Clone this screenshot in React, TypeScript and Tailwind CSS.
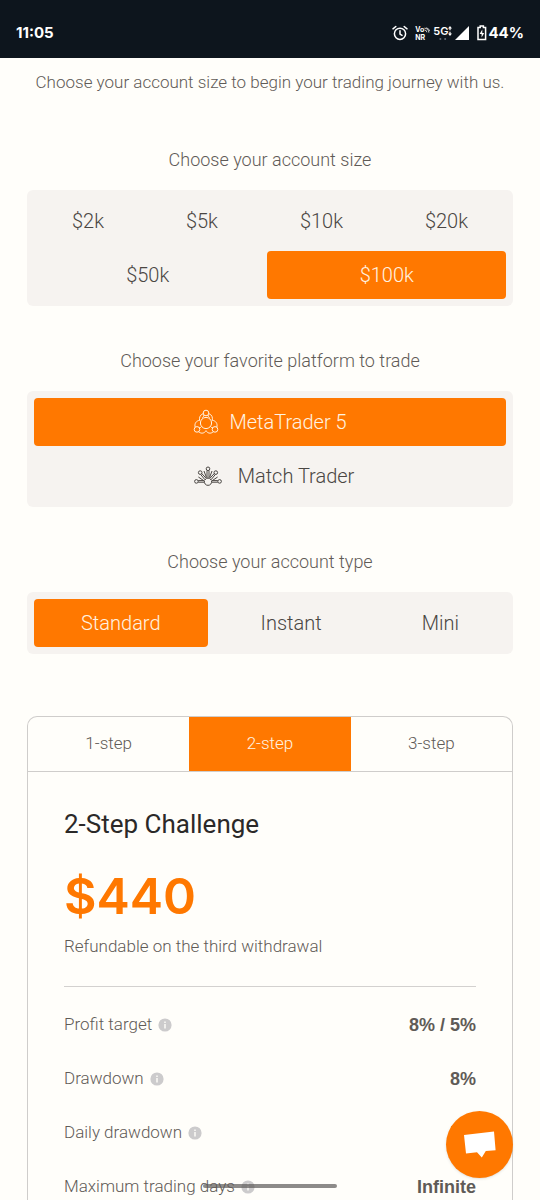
import { useState, type ReactNode } from "react";
import { clsx } from "clsx";

const SIZES = ["$2k", "$5k", "$10k", "$20k", "$50k", "$100k"];
const TYPES = ["Standard", "Instant", "Mini"];
const STEPS = ["1-step", "2-step", "3-step"];

const DETAILS = [
  { label: "Profit target", value: "8% / 5%" },
  { label: "Drawdown", value: "8%" },
  { label: "Daily drawdown", value: "5%" },
  { label: "Maximum trading days", value: "Infinite" },
];

function StatusBar() {
  return (
    <header className="flex h-[58px] shrink-0 items-center justify-between bg-[#0d151d] px-4 pt-2 font-['Inter',sans-serif] text-white">
      <span className="text-[15px] font-bold">11:05</span>
      <div className="flex items-center gap-[3px]">
        <svg
          className="mr-1 size-4"
          viewBox="0 0 16 16"
          fill="none"
          stroke="currentColor"
          strokeWidth="1.5"
          strokeLinecap="round"
        >
          <circle cx="8" cy="8.8" r="5.6" />
          <path d="M8 5.8v3.3l2 1.3M1 3.8l2.8-2.3M15 3.8l-2.8-2.3" />
        </svg>
        <div className="flex flex-col text-[7px] leading-[7px] font-bold">
          <span className="flex items-center">
            Vo
            <svg
              className="h-2 w-1.5"
              viewBox="0 0 8 8"
              fill="none"
              stroke="currentColor"
              strokeWidth="1"
            >
              <path d="M.5 1.5a6 6 0 0 1 6 6M.8 4a3.2 3.2 0 0 1 3 3M3 1a6 6 0 0 1 4.6 4.5" />
            </svg>
          </span>
          <span>NR</span>
        </div>
        <div className="flex flex-col">
          <span className="flex items-center text-[11px] leading-3 font-semibold">
            5G
            <svg className="h-2.5 w-1" viewBox="0 0 4 10" fill="currentColor">
              <path d="M2 0l2 2.6H2.6v1.6H1.4V2.6H0zM2 10L0 7.4h1.4V5.8h1.2v1.6H4z" />
            </svg>
          </span>
          <svg className="mx-auto h-1 w-2" viewBox="0 0 8 4" fill="#66707a">
            <circle cx="1.4" cy="2" r="1" />
            <circle cx="6.2" cy="2" r="1" />
          </svg>
        </div>
        <svg className="size-3.5" viewBox="0 0 14 14" fill="currentColor">
          <path d="M14 0v14H0z" />
        </svg>
        <div className="ml-1 flex items-center">
          <svg
            className="h-4 w-3"
            viewBox="0 0 12 16"
            fill="none"
            stroke="currentColor"
            strokeWidth="1.5"
          >
            <path d="M4.2 2.5V1h3.2v1.5h2.2v12H2v-12z" />
            <path d="M6.3 4.6L3.6 9h2v3.4L8.2 8h-1.9z" fill="currentColor" stroke="none" />
          </svg>
          <span className="text-[15px] leading-5 font-bold">44%</span>
        </div>
      </div>
    </header>
  );
}

function MetaTraderIcon() {
  return (
    <svg
      className="size-[26px]"
      viewBox="0 0 26 26"
      fill="none"
      stroke="currentColor"
      strokeWidth="1"
    >
      <circle cx="13" cy="14" r="5.6" />
      <circle cx="13" cy="4" r="2.8" />
      <circle cx="4" cy="20.4" r="2.8" />
      <circle cx="22" cy="20.4" r="2.8" />
      <path d="M10.2 4.6C7.2 5.6 6 8.6 6.6 11.4M15.8 4.6c3 1 4.2 4 3.4 6.8" />
      <path d="M2.2 18.2c-1-3.4.8-6.4 4.6-7M23.8 18.2c1-3.4-.8-6.4-4.6-7" />
      <path d="M6.2 18.6c1 .2 1.8-.2 2.2-1M19.8 18.6c-1 .2-1.8-.2-2.2-1M10.8 6c.2 1-.4 2-1.4 2.6M15.2 6c-.2 1 .4 2 1.4 2.6" />
      <path d="M5.6 22.8c3 2.4 6 1.4 7.4-1.2 1.4 2.6 4.4 3.6 7.4 1.2" />
    </svg>
  );
}

function MatchTraderIcon() {
  return (
    <svg
      className="h-5 w-9"
      viewBox="-8 0 36 20"
      fill="none"
      stroke="currentColor"
      strokeWidth="1"
    >
      <circle cx="14" cy="2.8" r="1.8" />
      <circle cx="6.2" cy="6.6" r="1.8" />
      <circle cx="21.8" cy="6.6" r="1.8" />
      <circle cx="2.4" cy="15.4" r="1.8" />
      <circle cx="25.6" cy="15.4" r="1.8" />
      <path d="M10.4 14.8a3.7 3.7 0 1 0 7.2 0" />
      <path d="M13 4.6v7.6h2V4.6" />
      <path d="M6.6 8.4l4.4 5.4 1.4-1.2-4.8-5.2M21.4 8.4L17 13.8l-1.4-1.2 4.8-5.2" />
      <path d="M4.2 14.6h6.2M4.2 16.2h6.2M17.6 14.6h6.2M17.6 16.2h6.2" />
      <path d="M4.4 11l5 3.4M23.6 11l-5 3.4M10 5l2.4 6.4M18 5l-2.4 6.4" />
    </svg>
  );
}

const PLATFORMS = [
  { name: "MetaTrader 5", icon: <MetaTraderIcon />, gap: "gap-2.5" },
  { name: "Match Trader", icon: <MatchTraderIcon />, gap: "gap-4" },
];

interface OptionProps {
  selected: boolean;
  onClick: () => void;
  className?: string;
  children: ReactNode;
}

function Option({ selected, onClick, className, children }: OptionProps) {
  return (
    <button
      type="button"
      aria-pressed={selected}
      onClick={onClick}
      className={clsx(
        "flex h-12 flex-auto items-center justify-center rounded px-8 text-xl",
        selected ? "bg-[#ff7800] text-[#fff3e2]" : "text-[#4a4643]",
        className
      )}
    >
      {children}
    </button>
  );
}

function OptionGroup({ title, children }: { title: string; children: ReactNode }) {
  return (
    <section>
      <h2 className="mb-4 text-center text-lg leading-7">{title}</h2>
      <div className="flex flex-wrap gap-1.5 rounded-md bg-[#f6f3f0] p-[7px]">{children}</div>
    </section>
  );
}

export default function App() {
  const [size, setSize] = useState("$100k");
  const [platform, setPlatform] = useState("MetaTrader 5");
  const [type, setType] = useState("Standard");
  const [step, setStep] = useState("2-step");

  return (
    <div className="flex h-screen flex-col overflow-hidden bg-[#fffefa] font-[Roboto,sans-serif] font-light text-[#5f5b57]">
      <StatusBar />

      <main className="flex min-h-0 flex-1 flex-col px-[27px] pt-2.5">
        <p className="mb-[50px] text-center text-[17px] leading-7">
          Choose your account size to begin your trading journey with us.
        </p>

        <div className="flex flex-col gap-[41px]">
          <OptionGroup title="Choose your account size">
            {SIZES.map((s) => (
              <Option key={s} selected={size === s} onClick={() => setSize(s)}>
                {s}
              </Option>
            ))}
          </OptionGroup>

          <OptionGroup title="Choose your favorite platform to trade">
            {PLATFORMS.map((p) => (
              <Option
                key={p.name}
                selected={platform === p.name}
                onClick={() => setPlatform(p.name)}
                className={clsx("w-full", p.gap)}
              >
                {p.icon}
                {p.name}
              </Option>
            ))}
          </OptionGroup>

          <OptionGroup title="Choose your account type">
            {TYPES.map((t) => (
              <Option key={t} selected={type === t} onClick={() => setType(t)}>
                {t}
              </Option>
            ))}
          </OptionGroup>
        </div>

        {/* Challenge card */}
        <section className="mt-[62px] min-h-0 flex-1 overflow-hidden rounded-t-[10px] border border-b-0 border-[#cfcdcb]">
          <div role="tablist" className="flex border-b border-[#cfcdcb]">
            {STEPS.map((s) => (
              <button
                key={s}
                type="button"
                role="tab"
                aria-selected={step === s}
                onClick={() => setStep(s)}
                className={clsx(
                  "h-[54px] flex-auto text-[17px]",
                  step === s && "bg-[#ff7800] text-[#fff3e2]"
                )}
              >
                {s}
              </button>
            ))}
          </div>

          <div className="px-9 pt-9">
            <h3 className="text-[26px] leading-8 font-normal text-[#2b2928]">2-Step Challenge</h3>
            <p className="mt-7 font-['Inter',sans-serif] text-[50px] leading-14 font-semibold text-[#ff7800]">
              $440
            </p>
            <p className="mt-2 text-[17px] leading-7">Refundable on the third withdrawal</p>
            <hr className="mt-[26px] mb-6 border-[#d3d1cf]" />

            <dl className="flex flex-col gap-[26px]">
              {DETAILS.map((d) => (
                <div key={d.label} className="flex h-7 items-center justify-between">
                  <dt className="flex items-center gap-1.5 text-[17px]">
                    {d.label}
                    <svg className="size-3.5" viewBox="0 0 14 14">
                      <circle cx="7" cy="7" r="6.6" fill="#cccbcc" />
                      <path d="M7 6v4.4M7 3.4v1.5" stroke="#fffefa" strokeWidth="1.4" />
                    </svg>
                  </dt>
                  <dd className="font-['Liberation_Sans',Arial,sans-serif] text-lg font-bold">
                    {d.value}
                  </dd>
                </div>
              ))}
            </dl>
          </div>
        </section>
      </main>

      <button
        type="button"
        aria-label="Open chat"
        className="fixed right-[27px] bottom-[22px] flex size-[67px] items-center justify-center rounded-full bg-[#ff7800] shadow-sm"
      >
        <svg className="h-7 w-8" viewBox="0 0 32 28" fill="white">
          <path d="M0 4L30 .5l1.6 18.8-9.8.8-4 6.4-4.8-5.2L2 22.4z" />
        </svg>
      </button>

      {/* Gesture bar */}
      <div className="fixed inset-x-0 bottom-3 mx-auto h-1 w-[134px] rounded-full bg-[#5c5a58]/70" />
    </div>
  );
}
